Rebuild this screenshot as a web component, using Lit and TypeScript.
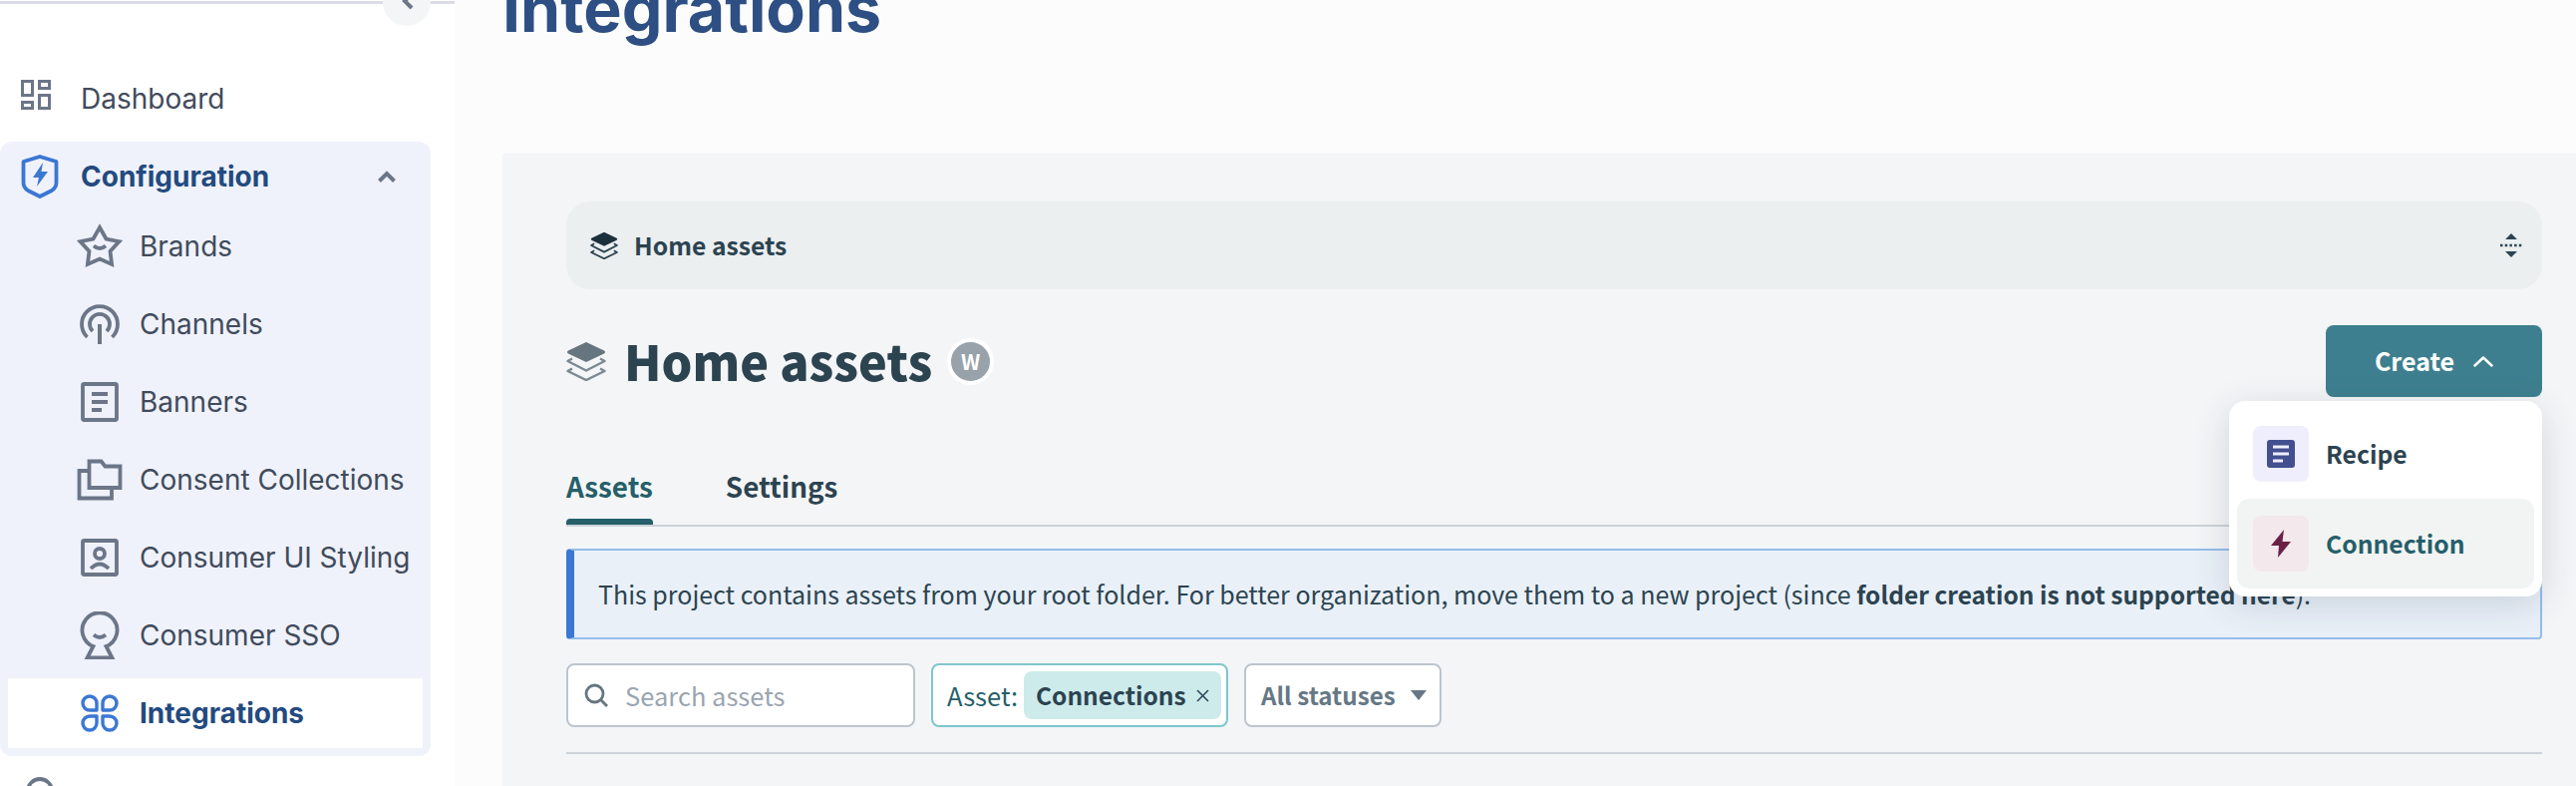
import { LitElement, html, css, svg } from "lit";
import { customElement } from "lit/decorators.js";

const ico = (body: unknown, colour = "#6b7688", width = 3.8) => html`<svg class="ico" viewBox="0 0 48 48" fill="none" stroke=${colour} stroke-width=${width}>${body}</svg>`;

const subItems = [
  {
    label: "Brands",
    icon: svg`<path d="M24 5l6.500 11.500 13 2.600-9 9.800 1.600 13L24 36.500l-12.100 5.400 1.600-13-9-9.800 13-2.600z"/><path d="M18 23.500q6 5 12 0"/>`,
  },
  {
    label: "Channels",
    icon: svg`<path d="M11.500 37A18 18 0 1 1 36.500 37"/><path d="M17 31a10 10 0 1 1 14 0" /><path d="M24 24v20" stroke-width="4"/>`,
  },
  {
    label: "Banners",
    icon: svg`<rect x="7" y="6" width="34" height="36" rx="1.500"/><path d="M16 16h16M16 24h16M16 32h10"/>`,
  },
  {
    label: "Consent Collections",
    icon: svg`<path d="M13.500 5.500h12l4 5h15v21.500h-31z"/><path d="M13.500 15H3.500v27.500H36V32"/>`,
  },
  {
    label: "Consumer UI Styling",
    icon: svg`<rect x="7" y="7" width="34" height="34" rx="1.500"/><circle cx="24" cy="20" r="5"/><path d="M15 35q9-9 18 0"/>`,
  },
  {
    label: "Consumer SSO",
    icon: svg`<path d="M17.500 35A17.500 17.500 0 1 1 30.500 35L36.500 46.500H11.500Z"/><path d="M18 23.500q6 5 12 0"/>`,
  },
];

@customElement("app-root")
export class AppRoot extends LitElement {
  static styles = css`
    :host {
      display: block;
      height: 788px;
      overflow: hidden;
      background: #fcfcfc;
    }
    .page {
      display: flex;
      height: 788px;
    }
    .side {
      position: relative;
      width: 456px;
      flex: none;
      background: #fff;
      font-family: Inter, sans-serif;
      font-size: 28px;
      color: #414b5c;
    }
    .rule {
      margin-top: 1px;
      height: 3px;
      background: #dcdce4;
    }
    .collapse {
      position: absolute;
      left: 384px;
      top: -22px;
      width: 48px;
      height: 48px;
      border-radius: 50%;
      background: #f4f5f7;
    }
    .collapse svg {
      display: block;
      width: 48px;
      height: 48px;
    }
    .ico {
      width: 48px;
      height: 48px;
      flex: none;
      display: block;
    }
    .row {
      display: flex;
      align-items: center;
      height: 70px;
      gap: 17px;
      padding-left: 8px;
    }
    .dash {
      margin: 56px 0 12px 8px;
    }
    .dash span {
      padding-top: 8px;
    }
    .group {
      width: 432px;
      box-sizing: border-box;
      padding: 0 8px 8px;
      background: #eff2fa;
      border-radius: 12px;
      display: flex;
      flex-direction: column;
      gap: 8px;
    }
    .group-head {
      height: 62px;
      box-sizing: border-box;
      padding-top: 8px;
      font-weight: 700;
      color: #234a80;
    }
    .group-head .chev {
      width: 18px;
      height: 12px;
      margin-left: auto;
      margin-right: 27px;
    }
    .sub {
      padding-left: 68px;
      gap: 16px;
    }
    .sub.on {
      background: #fff;
      font-weight: 700;
      color: #234a80;
    }
    .next {
      margin: 21px 0 0 16px;
    }
    .main {
      flex: 1;
      min-width: 0;
      display: flex;
      flex-direction: column;
      padding-left: 48px;
      font-family: "Noto Sans CJK SC", "Source Sans Pro", sans-serif;
      color: #2c4350;
    }
    .top {
      height: 154px;
      flex: none;
    }
    .top h1 {
      margin: -23px 0 0;
      font: 700 64.500px/64px Inter, sans-serif;
      color: #2d4f83;
    }
    .panel {
      flex: 1;
      background: #f4f5f7;
      padding: 48px 34px 0 64px;
    }
    .panel span {
      padding-bottom: 2px;
    }
    .crumb {
      height: 88px;
      border-radius: 24px;
      background: #ebeff0;
      display: flex;
      align-items: center;
      padding: 0 20px 0 24px;
      font-size: 24.700px;
      font-weight: 600;
    }
    .crumb .layers {
      width: 28px;
      height: 28px;
      margin-right: 16px;
    }
    .crumb .step {
      width: 22px;
      height: 26px;
      margin-left: auto;
    }
    .head {
      display: flex;
      align-items: center;
      height: 72px;
      margin-top: 36px;
    }
    .head .layers {
      width: 40px;
      height: 40px;
      margin-right: 18px;
    }
    .head h2 {
      margin: 0;
      padding-bottom: 2px;
      font-size: 48.500px;
      font-weight: 900;
      line-height: 70px;
    }
    .badge {
      width: 39px;
      height: 39px;
      margin-left: 15px;
      border: 4px solid #fff;
      border-radius: 50%;
      background: #97a2ab;
      color: #fff;
      font-size: 21px;
      font-weight: 700;
      display: flex;
      align-items: center;
      justify-content: center;
    }
    .create-wrap {
      position: relative;
      margin-left: auto;
    }
    .create {
      width: 217px;
      height: 72px;
      box-sizing: border-box;
      border-radius: 8px;
      background: #3e7f8f;
      color: #fff;
      font-size: 25px;
      font-weight: 600;
      display: flex;
      align-items: center;
      justify-content: center;
      gap: 19px;
    }
    .create svg {
      width: 20px;
      height: 12px;
    }
    .menu {
      position: absolute;
      top: 76px;
      right: 0;
      width: 314px;
      box-sizing: border-box;
      padding: 8px;
      border-radius: 16px;
      background: #fff;
      box-shadow: 0 8px 36px rgba(30, 50, 70, 0.16);
      font-size: 24.700px;
      font-weight: 600;
      z-index: 2;
    }
    .opt {
      height: 90px;
      display: flex;
      align-items: center;
      gap: 17px;
      padding-left: 16px;
      border-radius: 12px;
    }
    .opt.hot {
      background: #f2f4f3;
      color: #255f69;
    }
    .opt-ico {
      width: 56px;
      height: 56px;
      border-radius: 8px;
      display: flex;
      align-items: center;
      justify-content: center;
    }
    .opt-ico svg {
      width: 28px;
      height: 28px;
    }
    .recipe {
      background: #efeefc;
    }
    .conn {
      background: #f3e8ec;
    }
    .tabs {
      display: flex;
      gap: 73px;
      margin-top: 52px;
      border-bottom: 2px solid #cdd3d9;
      font-size: 27.800px;
      font-weight: 600;
    }
    .tab {
      height: 76px;
      box-sizing: border-box;
      padding-top: 6px;
      display: flex;
      flex-direction: column;
    }
    .tab span {
      flex: 1;
      display: flex;
      align-items: center;
    }
    .tab i {
      display: block;
      height: 6px;
      border-radius: 4px 4px 0 0;
    }
    .tab.on {
      color: #255f69;
    }
    .tab.on i {
      background: #255f69;
    }
    .note {
      margin-top: 22px;
      height: 91px;
      box-sizing: border-box;
      border: 2px solid #94bdec;
      border-left: 8px solid #3b77d3;
      border-radius: 4px;
      background: #e9f0f8;
      display: flex;
      align-items: center;
      padding-left: 24px;
      font-size: 25px;
      white-space: nowrap;
    }
    .note b {
      font-size: 24.500px;
      font-weight: 600;
    }
    .filters {
      display: flex;
      gap: 16px;
      margin-top: 24px;
      padding-bottom: 25px;
      border-bottom: 2px solid #cdd3d9;
      font-size: 25.500px;
    }
    .filter {
      height: 64px;
      box-sizing: border-box;
      border: 2px solid #bcc5ce;
      border-radius: 8px;
      background: #fff;
      display: flex;
      align-items: center;
    }
    .search {
      width: 350px;
      padding-left: 16px;
      gap: 17px;
      color: #9aa5b0;
    }
    .search svg {
      width: 24px;
      height: 24px;
    }
    .asset {
      width: 298px;
      padding-left: 14px;
      gap: 6px;
      border-color: #7fc6cd;
      color: #255f69;
    }
    .chip {
      height: 48px;
      width: 198px;
      box-sizing: border-box;
      padding-left: 12px;
      border-radius: 8px;
      background: #cdebeb;
      color: #2c4350;
      font-size: 24.500px;
      font-weight: 600;
      display: flex;
      align-items: center;
      gap: 10px;
    }
    .chip svg {
      width: 13px;
      height: 13px;
    }
    .status {
      width: 198px;
      padding-left: 15px;
      gap: 15px;
      color: #667885;
      font-size: 24.200px;
      font-weight: 600;
    }
    .status svg {
      width: 16px;
      height: 10px;
    }
  `;

  layers(top: string, rest: string) {
    return html`<svg class="layers" viewBox="0 0 40 40" fill="none">
      <path d="M20 1L38 9.500Q40 11 38 12.500L20 21 2 12.500Q0 11 2 9.500Z" fill=${top} />
      <path d="M6 17.500L1.500 20 20 29.500 38.500 20 34 17.500" stroke=${rest} stroke-width="2.500" stroke-linejoin="round" />
      <path d="M6 27.500L1.500 30 20 39 38.500 30 34 27.500" stroke=${rest} stroke-width="2.500" stroke-linejoin="round" />
    </svg>`;
  }

  render() {
    return html`
      <div class="page">
        <aside class="side">
          <div class="rule"></div>
          <div class="collapse">
            <svg viewBox="0 0 48 48" fill="none" stroke="#6b7688" stroke-width="4"><path d="M29 16l-7 7 7 7" /></svg>
          </div>
          <div class="row dash">
            ${ico(svg`<g stroke-width="3"><rect x="6.500" y="10.500" width="10" height="14"/><rect x="23.500" y="10.500" width="10" height="7"/><rect x="6.500" y="31.500" width="10" height="6"/><rect x="23.500" y="24.500" width="10" height="13"/></g>`)}
            <span>Dashboard</span>
          </div>
          <div class="group">
            <div class="row group-head">
              ${ico(svg`<path d="M24 4L40.500 9V30Q40.500 35 36 38L24 44 12 38Q7.500 35 7.500 30V9Z" stroke-linejoin="round"/><path d="M27 10L17 25H23L21 34 32 19H25.500Z" fill="#3b77d3" stroke="none"/>`, "#3b77d3")}
              <span>Configuration</span>
              <svg class="chev" viewBox="0 0 18 12" fill="none" stroke="#6b7688" stroke-width="4"><path d="M1.500 10.500L9 3l7.500 7.500" /></svg>
            </div>
            ${subItems.map((s) => html`<div class="row sub">${ico(s.icon)}<span>${s.label}</span></div>`)}
            <div class="row sub on">
              ${ico(svg`<g stroke-linejoin="round"><path d="M21 21H14A7 7 0 1 1 21 14Z"/><path d="M27 21H34A7 7 0 1 0 27 14Z"/><path d="M21 27H14A7 7 0 1 0 21 34Z"/><path d="M27 27H34A7 7 0 1 1 27 34Z"/></g>`, "#3b77d3", 3.4)}
              <span>Integrations</span>
            </div>
          </div>
          <div class="next">${ico(svg`<circle cx="24" cy="14" r="12"/>`)}</div>
        </aside>
        <main class="main">
          <div class="top"><h1>Integrations</h1></div>
          <section class="panel">
            <div class="crumb">
              ${this.layers("#1c303c", "#2c4350")}
              <span>Home assets</span>
              <svg class="step" viewBox="0 0 22 26" fill="#2c4350">
                <path d="M5 7l6-6 6 6zM5 19l6 6 6-6z" />
                <path d="M0 13h22" stroke="#2c4350" stroke-width="2.500" stroke-dasharray="2.500 2.200" fill="none" />
              </svg>
            </div>
            <div class="head">
              ${this.layers("#65767f", "#7a8a93")}
              <h2>Home assets</h2>
              <div class="badge">W</div>
              <div class="create-wrap">
                <div class="create">
                  <span>Create</span>
                  <svg viewBox="0 0 20 12" fill="none" stroke="#fff" stroke-width="2.500" stroke-linecap="round" stroke-linejoin="round"><path d="M1.500 10.500L10 2.500l8.500 8" /></svg>
                </div>
                <div class="menu">
                  <div class="opt">
                    <div class="opt-ico recipe">
                      <svg viewBox="0 0 28 28"><rect width="28" height="28" rx="3" fill="#434f8f" /><path d="M6 7h16M6 14h16M6 21h10" stroke="#efeefc" stroke-width="3" /></svg>
                    </div>
                    <span>Recipe</span>
                  </div>
                  <div class="opt hot">
                    <div class="opt-ico conn">
                      <svg viewBox="0 0 28 28"><path d="M17 0L4 16H12L11 28 24 12H15.500Z" fill="#6b2145" /></svg>
                    </div>
                    <span>Connection</span>
                  </div>
                </div>
              </div>
            </div>
            <div class="tabs">
              <div class="tab on"><span>Assets</span><i></i></div>
              <div class="tab"><span>Settings</span><i></i></div>
            </div>
            <div class="note">
              <span>This project contains assets from your root folder. For better organization, move them to a new project (since <b>folder creation is not supported here</b>).</span>
            </div>
            <div class="filters">
              <div class="filter search">
                <svg viewBox="0 0 24 24" fill="none" stroke="#65767f" stroke-width="2.800"><circle cx="10.500" cy="10.500" r="8.500" /><path d="M16.500 16.500L23 23" /></svg>
                <span>Search assets</span>
              </div>
              <div class="filter asset">
                <span>Asset:</span>
                <div class="chip">
                  <span>Connections</span>
                  <svg viewBox="0 0 13 13" fill="none" stroke="#2c4350" stroke-width="1.500"><path d="M1 1l11 11M12 1L1 12" /></svg>
                </div>
              </div>
              <div class="filter status">
                <span>All statuses</span>
                <svg viewBox="0 0 16 10" fill="#667885"><path d="M0 0h16L8 10z" /></svg>
              </div>
            </div>
          </section>
        </main>
      </div>
    `;
  }
}
